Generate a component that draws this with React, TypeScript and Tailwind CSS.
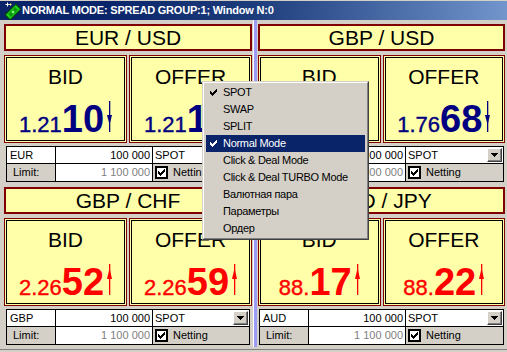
type Dir = "up" | "down"
type Quote = { small: string; big: string }
type Pair = { name: string; ccy: string; tone: "blue" | "red"; dir: Dir; bid: Quote; offer: Quote }

const pairs: Pair[] = [
  { name: "EUR / USD", ccy: "EUR", tone: "blue", dir: "down", bid: { small: "1.21", big: "10" }, offer: { small: "1.21", big: "13" } },
  { name: "GBP / USD", ccy: "GBP", tone: "blue", dir: "down", bid: { small: "1.76", big: "64" }, offer: { small: "1.76", big: "68" } },
  { name: "GBP / CHF", ccy: "GBP", tone: "red", dir: "up", bid: { small: "2.26", big: "52" }, offer: { small: "2.26", big: "59" } },
  { name: "AUD / JPY", ccy: "AUD", tone: "red", dir: "up", bid: { small: "88.", big: "17" }, offer: { small: "88.", big: "22" } },
]

const menu = [
  { label: "SPOT", checked: true },
  { label: "SWAP" },
  { label: "SPLIT" },
  { label: "Normal Mode", checked: true, active: true },
  { label: "Click & Deal Mode" },
  { label: "Click & Deal TURBO Mode" },
  { label: "Валютная пара" },
  { label: "Параметры" },
  { label: "Ордер" },
]

function Arrow({ dir }: { dir: Dir }) {
  return (
    <svg width="5" height="31" viewBox="0 0 5 31" className="ml-[3px] mb-[-1px] shrink-0">
      <rect x="2" y="0" width="1.3" height="31" fill="currentColor" />
      {dir === "down" ? (
        <path d="M0 14 H5 L2.6 24 Z" fill="currentColor" />
      ) : (
        <path d="M0 15 H5 L2.6 4 Z" fill="currentColor" />
      )}
    </svg>
  )
}

function Check({ color }: { color: string }) {
  return (
    <svg width="7" height="7" viewBox="0 0 7 7" shapeRendering="crispEdges">
      <path d="M6 0h1v3h-1v1h-1v1h-1v1h-1v1h-1v-1h-1v-1h-1v-3h1v1h1v1h1v-1h1v-1h1z" fill={color} />
    </svg>
  )
}

function PriceBox({ label, quote, pair }: { label: string; quote: Quote; pair: Pair }) {
  const color = pair.tone === "blue" ? "text-[#000080]" : "text-[#ff0000]"
  return (
    <div className="flex-1 border border-[#800000] bg-[#ffffaa] p-px">
      <div className="flex h-full flex-col items-center justify-between border border-black bg-[#ffffaa] pt-[8px] pb-[2px]">
        <div className="text-[21px] leading-none text-black">{label}</div>
        <div className={`flex items-baseline leading-none ${color}`}>
          <span className="text-[22px] [-webkit-text-stroke:0.4px_currentColor]">{quote.small}</span>
          <span className="text-[38px] font-bold">{quote.big}</span>
          <Arrow dir={pair.dir} />
        </div>
      </div>
    </div>
  )
}

function DropButton() {
  return (
    <div className="flex h-[14px] w-[15px] items-center justify-center border border-t-white border-l-white border-r-[#404040] border-b-[#404040] bg-[#d4d0c8] shadow-[inset_-1px_-1px_0_#808080]">
      <svg width="7" height="4" viewBox="0 0 7 4" shapeRendering="crispEdges">
        <path d="M0 0h7v1h-1v1h-1v1h-1v1h-1v-1h-1v-1h-1v-1h-1z" fill="#000" />
      </svg>
    </div>
  )
}

function Controls({ ccy, inset }: { ccy: string; inset: string }) {
  return (
    <div className={`mt-[3px] grid h-[36px] grid-cols-[49px_97px_1fr] grid-rows-[17px_18px] border-l border-t border-black text-[11px] leading-none text-black ${inset}`}>
      <div className="flex items-center border-b border-r border-black bg-white pl-[3px]">{ccy}</div>
      <div className="flex items-center justify-end border-b border-r border-black bg-white pr-[2px]">100 000</div>
      <div className="flex items-center justify-between border-b border-r border-black bg-white pl-[2px] pr-px">
        <span>SPOT</span>
        <DropButton />
      </div>
      <div className="flex items-center border-b border-r border-black pl-[6px]">Limit:</div>
      <div className="flex items-center justify-end border-b border-r border-black bg-white pr-[2px] text-[#808080]">1 100 000</div>
      <div className="flex items-center border-b border-r border-black pl-[2px]">
        <div className="flex h-[13px] w-[13px] items-center justify-center border-2 border-black bg-white">
          <Check color="#000" />
        </div>
        <span className="ml-[5px]">Netting</span>
      </div>
    </div>
  )
}

function Quadrant({ pair, inset, top }: { pair: Pair; inset: string; top: string }) {
  return (
    <div className={top}>
      <div className="flex h-[27px] items-center justify-center border-2 border-[#800000] bg-[#ffffaa] text-[21px] leading-none text-black">
        {pair.name}
      </div>
      <div className="mt-[4px] flex h-[88px] gap-[2px]">
        <PriceBox label="BID" quote={pair.bid} pair={pair} />
        <PriceBox label="OFFER" quote={pair.offer} pair={pair} />
      </div>
      <Controls ccy={pair.ccy} inset={inset} />
    </div>
  )
}

function AppIcon() {
  return (
    <svg width="17" height="18" viewBox="0 0 17 18" className="shrink-0">
      <g transform="rotate(-45 9 10)">
        <rect x="1.5" y="6.5" width="15" height="7" fill="#22d222" stroke="#004a00" />
        <rect x="4" y="8" width="10" height="4" fill="#0a9a0a" />
        <circle cx="9" cy="10" r="1.4" fill="#7dff7d" />
      </g>
      <path d="M3.5 0.5v4M1.5 2.5h4" stroke="#ffffff" strokeWidth="1" />
      <path d="M6.5 1.5v2M5.5 2.5h2" stroke="#ffff80" strokeWidth="1" />
    </svg>
  )
}

export default function App() {
  return (
    <div className="relative h-[352px] w-[507px] overflow-hidden bg-[#d4d0c8] pt-px font-['Liberation_Sans',Arial,sans-serif]">
      <div className="flex h-[19px] items-center bg-linear-to-r from-[#0a246a] from-20% via-[#1d3c7b] via-50% to-[#7295cc] pl-[4px]">
        <AppIcon />
        <span className="ml-px text-[11px] font-bold leading-none tracking-[-0.2px] text-white">
          NORMAL MODE: SPREAD GROUP:1; Window N:0
        </span>
      </div>

      <div className="flex h-[327px] pl-[4px]">
        <div className="w-[248px] pt-[4px]">
          <Quadrant pair={pairs[0]} inset="mx-[2px]" top="" />
          <Quadrant pair={pairs[2]} inset="mx-[2px]" top="mt-[5px]" />
        </div>
        <div className="w-[6px]">
          <div className="ml-px h-full w-[4px] border-l border-white bg-[#9c9cf4]" />
        </div>
        <div className="w-[247px] pt-[4px]">
          <Quadrant pair={pairs[1]} inset="mx-px" top="" />
          <Quadrant pair={pairs[3]} inset="mx-px" top="mt-[5px]" />
        </div>
      </div>
      <div className="mt-[2px] h-px w-full bg-[#808080]" />

      <div className="absolute left-[202px] top-[81px] w-[167px] border border-t-[#d4d0c8] border-l-[#d4d0c8] border-r-[#404040] border-b-[#404040]">
        <div className="border border-t-white border-l-white border-r-[#808080] border-b-[#808080] bg-[#d4d0c8] px-[2px] py-px">
          {menu.map((item) => (
            <div
              key={item.label}
              className={`flex h-[17px] items-center pl-[4px] text-[11px] leading-none tracking-[-0.3px] ${item.active ? "bg-[#0a246a] text-white" : "text-black"}`}
            >
              <div className="w-[13px]">{item.checked && <Check color={item.active ? "#fff" : "#000"} />}</div>
              <span>{item.label}</span>
            </div>
          ))}
        </div>
      </div>
    </div>
  )
}
